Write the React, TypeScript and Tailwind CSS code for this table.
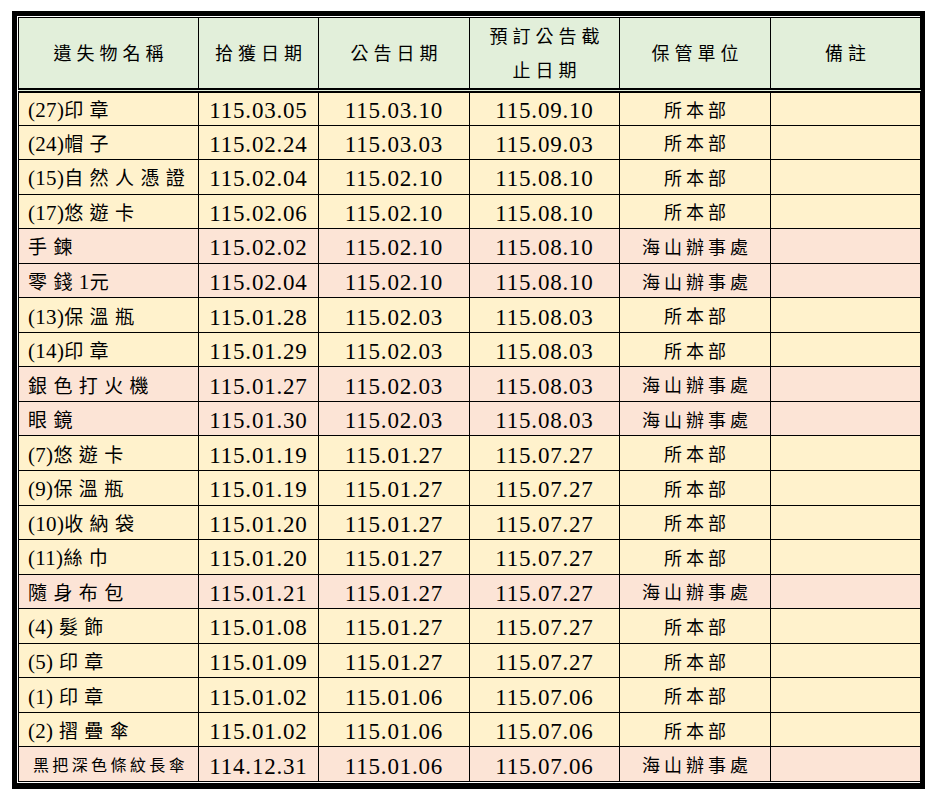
import React from "react";

type Row = {
    name: string;
    found: string;
    notice: string;
    until: string;
    unit: string;
};

const rows: Row[] = [
    { name: "(27)印章", found: "115.03.05", notice: "115.03.10", until: "115.09.10", unit: "所本部" },
    { name: "(24)帽子", found: "115.02.24", notice: "115.03.03", until: "115.09.03", unit: "所本部" },
    { name: "(15)自然人憑證", found: "115.02.04", notice: "115.02.10", until: "115.08.10", unit: "所本部" },
    { name: "(17)悠遊卡", found: "115.02.06", notice: "115.02.10", until: "115.08.10", unit: "所本部" },
    { name: "手鍊", found: "115.02.02", notice: "115.02.10", until: "115.08.10", unit: "海山辦事處" },
    { name: "零錢1元", found: "115.02.04", notice: "115.02.10", until: "115.08.10", unit: "海山辦事處" },
    { name: "(13)保溫瓶", found: "115.01.28", notice: "115.02.03", until: "115.08.03", unit: "所本部" },
    { name: "(14)印章", found: "115.01.29", notice: "115.02.03", until: "115.08.03", unit: "所本部" },
    { name: "銀色打火機", found: "115.01.27", notice: "115.02.03", until: "115.08.03", unit: "海山辦事處" },
    { name: "眼鏡", found: "115.01.30", notice: "115.02.03", until: "115.08.03", unit: "海山辦事處" },
    { name: "(7)悠遊卡", found: "115.01.19", notice: "115.01.27", until: "115.07.27", unit: "所本部" },
    { name: "(9)保溫瓶", found: "115.01.19", notice: "115.01.27", until: "115.07.27", unit: "所本部" },
    { name: "(10)收納袋", found: "115.01.20", notice: "115.01.27", until: "115.07.27", unit: "所本部" },
    { name: "(11)絲巾", found: "115.01.20", notice: "115.01.27", until: "115.07.27", unit: "所本部" },
    { name: "隨身布包", found: "115.01.21", notice: "115.01.27", until: "115.07.27", unit: "海山辦事處" },
    { name: "(4) 髮飾", found: "115.01.08", notice: "115.01.27", until: "115.07.27", unit: "所本部" },
    { name: "(5) 印章", found: "115.01.09", notice: "115.01.27", until: "115.07.27", unit: "所本部" },
    { name: "(1) 印章", found: "115.01.02", notice: "115.01.06", until: "115.07.06", unit: "所本部" },
    { name: "(2) 摺疊傘", found: "115.01.02", notice: "115.01.06", until: "115.07.06", unit: "所本部" },
    { name: "黑把深色條紋長傘", found: "114.12.31", notice: "115.01.06", until: "115.07.06", unit: "海山辦事處" },
];

// CJK characters get wide tracking, latin digits/parens stay tight
function Spaced({ text, cjk, latin }: { text: string; cjk: string; latin: string }) {
    const parts = text.match(/[\u3000-\u9fff\uff00-\uffef]+|[^\u3000-\u9fff\uff00-\uffef]+/g) ?? [];
    return (
        <>
            {parts.map((p, i) =>
                /[\u3000-\u9fff]/.test(p) ? (
                    <span key={i} className={cjk}>{p}</span>
                ) : (
                    <span key={i} className={latin}>{p}</span>
                )
            )}
        </>
    );
}

const th = "border border-black border-b-[5px] border-double font-normal text-[18px] tracking-[5px] text-black p-0 pt-[2px]";
const td = "border border-black p-0 pt-[4px]";
const date = "text-center text-[23px] tracking-[0.8px] leading-none";

export default function App() {
    return (
        <div className="min-h-[800px] bg-white pt-[11px] pl-[12px] font-['Liberation_Serif','Noto_Sans_CJK_TC',serif] text-black">
            <div className="w-[913px] border-[5px] border-b-[6px] border-black bg-white p-px">
                <table className="w-full table-fixed border-collapse">
                    <colgroup>
                        <col className="w-[180px]" />
                        <col className="w-[120px]" />
                        <col className="w-[151px]" />
                        <col className="w-[150px]" />
                        <col className="w-[151px]" />
                        <col className="w-[150px]" />
                    </colgroup>
                    <thead>
                        <tr className="h-[70px] bg-[#e2efda]">
                            <th className={th}><span className="pl-[5px]">遺失物名稱</span></th>
                            <th className={th}><span className="pl-[5px]">拾獲日期</span></th>
                            <th className={th}><span className="pl-[5px]">公告日期</span></th>
                            <th className={`${th} leading-[34px]`}>
                                <div className="pl-[5px]">預訂公告截</div>
                                <div className="pl-[5px]">止日期</div>
                            </th>
                            <th className={th}><span className="pl-[5px]">保管單位</span></th>
                            <th className={th}><span className="pl-[5px]">備註</span></th>
                        </tr>
                    </thead>
                    <tbody>
                        {rows.map((r, i) => {
                            const pink = r.unit === "海山辦事處";
                            const last = i === rows.length - 1;
                            return (
                                <tr key={i} className={`h-[34.55px] ${pink ? "bg-[#fce4d6]" : "bg-[#fff2cc]"}`}>
                                    {last ? (
                                        <td className={`${td} text-center text-[16px] leading-none`}>
                                            <span className="pl-[4px]">
                                                <Spaced text={r.name} cjk="tracking-[3.4px]" latin="tracking-[1px]" />
                                            </span>
                                        </td>
                                    ) : (
                                        <td className={`${td} pl-[9px] text-[19px] leading-none whitespace-nowrap`}>
                                            <Spaced text={r.name} cjk="tracking-[6.4px]" latin="text-[21px] tracking-[0.3px]" />
                                        </td>
                                    )}
                                    <td className={`${td} ${date}`}>{r.found}</td>
                                    <td className={`${td} ${date}`}>{r.notice}</td>
                                    <td className={`${td} ${date}`}>{r.until}</td>
                                    <td className={`${td} text-center text-[18px] tracking-[4px] leading-none`}>
                                        <span className="pl-[4px]">{r.unit}</span>
                                    </td>
                                    <td className={td}></td>
                                </tr>
                            );
                        })}
                    </tbody>
                </table>
            </div>
        </div>
    );
}
